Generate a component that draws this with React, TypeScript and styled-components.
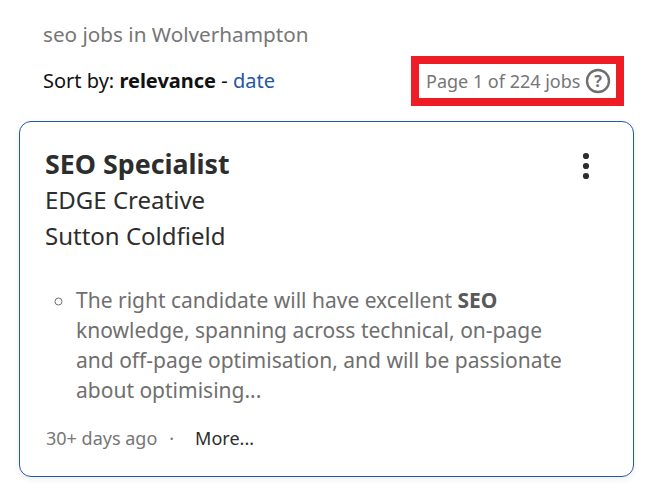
import React from "react";
import styled, { createGlobalStyle } from "styled-components";

const Global = createGlobalStyle`
  html, body { margin: 0; padding: 0; background: #fff; }
  body { font-family: "Noto Sans", sans-serif; }
`;
const Page = styled.div`
  width: 654px; height: 491px; overflow: hidden; box-sizing: border-box;
  padding: 21px 20px 0 19px;
`;
const Query = styled.div`
  margin-left: 24px; font-size: 20.7px; line-height: 27px; color: #767676;
`;
const SortRow = styled.div`
  display: flex; justify-content: space-between; align-items: center;
  margin-top: 8px; height: 50px;
`;
const Sort = styled.div`
  margin-left: 24px; font-size: 20px; color: #111; line-height: 26px;
  b { font-weight: 700; } a { color: #2557a7; }
`;
const PageBox = styled.div`
  display: flex; align-items: center; gap: 5px; box-sizing: border-box;
  height: 50px; width: 213px; margin-right: 10px; padding-left: 7px;
  border: 8px solid #ee1c25; font-size: 18px; color: #767676;
`;
const HelpIcon = styled.svg`flex: none;`;
const Card = styled.div`
  box-sizing: border-box; width: 615px; height: 356px; margin-top: 15px;
  border: 1px solid #2557a7; border-radius: 12px; padding: 24px 25px 0;
  position: relative; color: #2d2d2d; box-shadow: 0 2px 6px rgba(0,0,0,.08);
`;
const Title = styled.div`font-size: 26.8px; font-weight: 700; line-height: 36px;`;
const Line = styled.div`font-size: 24px; line-height: 36px;`;
const Snippet = styled.ul`
  margin: 31px 0 0; padding: 0 0 0 31px; width: 500px; color: #6f6f6f;
  font-size: 21px; line-height: 30px; list-style: circle;
  b { color: #595959; }
`;
const Footer = styled.div`
  display: flex; margin-top: 21px; padding-left: 1px; font-size: 18px; line-height: 24px; color: #767676;
`;
const More = styled.span`color: #2d2d2d; margin-left: 21px;`;
const Dot = styled.span`margin-left: 12px;`;
const Kebab = styled.svg`position: absolute; right: 42px; top: 28.5px;`;

export default function App() {
  return (
    <Page>
      <Global />
      <Query>seo jobs in Wolverhampton</Query>
      <SortRow>
        <Sort>Sort by: <b>relevance</b> - <a>date</a></Sort>
        <PageBox>
          Page 1 of 224 jobs
          <HelpIcon width="26" height="26" viewBox="0 0 26 26">
            <circle cx="13" cy="13" r="11" fill="none" stroke="#6f6f6f" strokeWidth="2.4" />
            <text x="13" y="19" textAnchor="middle" fontSize="16" fontWeight="700" fill="#6f6f6f" fontFamily="Noto Sans">?</text>
          </HelpIcon>
        </PageBox>
      </SortRow>
      <Card>
        <Title>SEO Specialist</Title>
        <Line>EDGE Creative</Line>
        <Line>Sutton Coldfield</Line>
        <Snippet>
          <li>The right candidate will have excellent <b>SEO</b> knowledge, spanning across technical, on-page and off-page optimisation, and will be passionate about optimising...</li>
        </Snippet>
        <Footer>30+ days ago<Dot>·</Dot><More>More...</More></Footer>
        <Kebab width="10" height="30" viewBox="0 0 10 30">
          <circle cx="5" cy="5" r="3.1" fill="#2d2d2d" />
          <circle cx="5" cy="15" r="3.1" fill="#2d2d2d" />
          <circle cx="5" cy="25" r="3.1" fill="#2d2d2d" />
        </Kebab>
      </Card>
    </Page>
  );
}
